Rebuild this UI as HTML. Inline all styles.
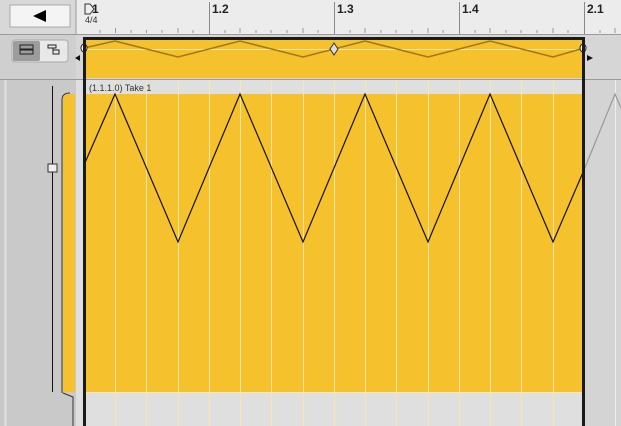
<!DOCTYPE html><html><head><style>
body{margin:0;width:621px;height:426px;overflow:hidden;background:#c9c9c9;font-family:"Liberation Sans",sans-serif}
</style></head><body>
<svg width="621" height="426" xmlns="http://www.w3.org/2000/svg" style="position:absolute;left:0;top:0">
<rect x="0" y="0" width="621" height="426" fill="#c9c9c9"/>
<rect x="0" y="0" width="76" height="34" fill="#d8d8d8"/>
<rect x="10" y="5" width="60" height="22" fill="#f4f4f4" stroke="#a8a8a8"/>
<polygon points="33,16 46,10 46,22" fill="#000"/>
<rect x="76" y="0" width="545" height="34" fill="#ececec"/>
<line x1="76" y1="0" x2="76" y2="426" stroke="#9a9a9a"/>
<g stroke="#8a8a8a">
<line x1="209.5" y1="2" x2="209.5" y2="34"/><line x1="334.5" y1="2" x2="334.5" y2="34"/><line x1="459.5" y1="2" x2="459.5" y2="34"/><line x1="584.5" y1="2" x2="584.5" y2="34"/>
</g>
<g stroke="#999">
<path d="M100 30v3M115.5 28v5M131 30v3M146.5 30v3M162 30v3M178 28v5M193 30v3M225 30v3M240 28v5M256 30v3M271 30v3M287 30v3M303 28v5M318 30v3M350 30v3M365 28v5M381 30v3M396 30v3M412 30v3M428 28v5M443 30v3M475 30v3M490 28v5M506 30v3M521 30v3M537 30v3M553 28v5M568 30v3M600 30v3M615 28v5"/>
</g>
<g font-size="12" font-weight="bold" fill="#222">
<text x="92" y="13">1</text><text x="212" y="13">1.2</text><text x="337" y="13">1.3</text><text x="462" y="13">1.4</text><text x="587" y="13">2.1</text>
</g>
<text x="85" y="23" font-size="9" fill="#333">4/4</text>
<path d="M85 4h5l4 5-4 5h-5z" fill="#eee" stroke="#333"/>
<line x1="0" y1="34.5" x2="621" y2="34.5" stroke="#9a9a9a"/>
<rect x="0" y="35" width="76" height="44" fill="#cfcfcf"/>
<rect x="12" y="40" width="56" height="22" rx="3" fill="#e8e8e8" stroke="#aaa"/>
<rect x="13" y="41" width="27" height="20" rx="2" fill="#9c9c9c"/>
<rect x="20" y="45" width="13" height="4" fill="none" stroke="#222"/><rect x="20" y="50" width="13" height="4" fill="none" stroke="#222"/>
<path d="M48 45h8v3h-8zM48 48h5M53 48v6h6v-4h-6" fill="none" stroke="#222"/>
<rect x="76" y="35" width="545" height="44" fill="#d6d6d6"/>
<polygon points="75,58 80,55 80,61" fill="#111"/>
<polygon points="587,55 593,58 587,61" fill="#111"/>
<rect x="84" y="37" width="500" height="41" fill="#f5c12c"/>
<rect x="84" y="37" width="500" height="3" fill="#1a1a1a"/>
<line x1="84" y1="49.5" x2="584" y2="49.5" stroke="#fbe6a8"/>
<polyline points="84,48 115,41 178,57 240,41 303,57 365,41 428,57 490,41 553,57 584,48" fill="none" stroke="#9c7a1e" stroke-width="1.5"/>
<ellipse cx="84" cy="48" rx="3" ry="4" fill="#fff" stroke="#222"/>
<ellipse cx="583" cy="48" rx="3" ry="4" fill="#fff" stroke="#222"/>
<path d="M334 43l4 6-4 6-4-6z" fill="#ddd" stroke="#333"/>
<line x1="0" y1="79.5" x2="621" y2="79.5" stroke="#9a9a9a"/>
<rect x="0" y="80" width="76" height="346" fill="#c9c9c9"/>
<line x1="5.5" y1="80" x2="5.5" y2="426" stroke="#e2e2e2" stroke-width="2"/>
<line x1="52.5" y1="86" x2="52.5" y2="392" stroke="#111"/>
<rect x="48" y="164" width="9" height="8" fill="#eee" stroke="#333"/>
<path d="M63 392V100q0-6 7-6h5v298z" fill="#f5c12c"/>
<path d="M62 393V100q0-7 8-7M63 393l10 4V426" fill="none" stroke="#333"/>
<rect x="76" y="80" width="545" height="346" fill="#dfdfdf"/>
<rect x="585" y="80" width="36" height="346" fill="#d4d4d4"/>
<rect x="84" y="94" width="500" height="298" fill="#f5c12c"/>
<g stroke="#fae7a8">
<path d="M115.5 80v346M146.5 80v346M178.5 80v346M209.5 80v346M240.5 80v346M271.5 80v346M303.5 80v346M334.5 80v346M365.5 80v346M396.5 80v346M428.5 80v346M459.5 80v346M490.5 80v346M521.5 80v346M553.5 80v346"/>
</g>
<path d="M615.5 80v346" stroke="#eee"/>
<line x1="84" y1="392.5" x2="584" y2="392.5" stroke="#f8e8b8"/>
<text x="89" y="91" font-size="9" fill="#333">(1.1.1.0) Take 1</text>
<polyline points="84,165 115,94 178,242 240,94 303,242 365,94 428,242 490,94 553,242 584,170" fill="none" stroke="#111" stroke-width="1.2"/>
<polyline points="584,170 615,94 621,108" fill="none" stroke="#999" stroke-width="1.2"/>
<rect x="83" y="37" width="3" height="389" fill="#1a1a1a"/>
<rect x="582" y="37" width="3" height="389" fill="#1a1a1a"/>
</svg>
</body></html>
